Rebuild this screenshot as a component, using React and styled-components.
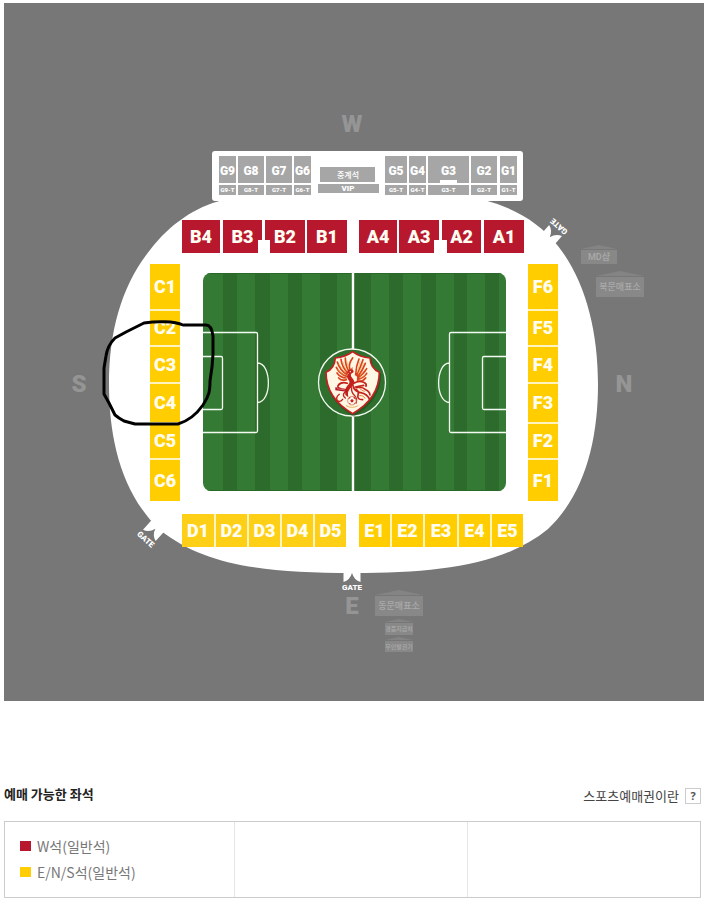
import React from "react";
import styled, { createGlobalStyle } from "styled-components";

const GlobalStyle = createGlobalStyle`
  *, *::before, *::after { box-sizing: border-box; }
  body {
    margin: 0;
    background: #fff;
    font-family: "Noto Sans CJK KR", "Noto Sans", sans-serif;
  }
`;

const RED = "#b8182d";
const YELLOW = "#ffcd00";
const AMBER = "#fdd017";
const GRAY = "#a6a6a6";

/* ---------- page parts ---------- */

const Page = styled.main`
  padding: 3px 7px 5px 4px;
`;

const StadiumMap = styled.svg`
  display: block;
  width: 100%;
  height: auto;
  background: #777;
`;

const Info = styled.section`
  margin: 80px 3px 0 0;
`;

const InfoHeader = styled.header`
  display: flex;
  align-items: center;
  justify-content: space-between;
  height: 30px;
  margin-bottom: 10px;
`;

const Title = styled.h2`
  margin: 0;
  padding-bottom: 4px;
  font-size: 13px;
  line-height: 20px;
  font-weight: 700;
  color: #222;
`;

const Help = styled.div`
  display: flex;
  align-items: center;
  gap: 6px;
`;

const HelpLink = styled.a`
  font-size: 13px;
  line-height: 20px;
  color: #444;
  text-decoration: none;
`;

const HelpButton = styled.button`
  width: 16px;
  height: 16px;
  padding: 0;
  border: 1px solid #ccc;
  background: #fff;
  color: #555;
  font: 700 11px/14px "Open Sans", sans-serif;
`;

const Grades = styled.div`
  display: grid;
  grid-template-columns: 33% 1fr 1fr;
  border: 1px solid #ccc;
`;

const GradeList = styled.ul`
  margin: 0;
  padding: 11px 15px 12px;
  list-style: none;

  & + & {
    border-left: 1px solid #e5e5e5;
  }
`;

const Grade = styled.li`
  display: flex;
  align-items: center;
  gap: 6px;
  height: 26px;
  font-size: 14px;
  color: #777;
`;

const Swatch = styled.span`
  width: 11px;
  height: 10px;
  background: ${(p) => p.$color};
`;

/* ---------- map parts ---------- */

const MapText = styled.text`
  font-family: "Roboto", "Noto Sans CJK KR", sans-serif;
  font-size: ${(p) => p.$size}px;
  font-weight: ${(p) => p.$weight || 900};
  fill: ${(p) => p.$color || "#fff"};
  text-anchor: middle;
`;

const PitchLine = styled.path`
  fill: none;
  stroke: #f4faf1;
  stroke-width: 1.3;
`;

/* [name, x, y, width, height, colour] */
const row = (names, xs, y, h, color) =>
  names.map((name, i) => [name, xs[i][0], y, xs[i][1] - xs[i][0], h, color]);
const column = (names, ys, x, w, color) =>
  names.map((name, i) => [name, x, ys[i][0], w, ys[i][1] - ys[i][0], color]);

const SIDE_YS = [[264, 309], [311, 345], [347, 382], [384, 422], [424, 458], [460, 501]];

const BLOCKS = [
  ...row(["B4", "B3", "B2", "B1"], [[182, 220], [223, 262], [265, 305], [307, 347]], 220, 33, RED),
  ...row(["A4", "A3", "A2", "A1"], [[359, 397], [399, 439], [442, 481], [484, 524]], 220, 33, RED),
  ...column(["C1", "C2", "C3", "C4", "C5", "C6"], SIDE_YS, 150, 30, YELLOW),
  ...column(["F6", "F5", "F4", "F3", "F2", "F1"], SIDE_YS, 528, 30, YELLOW),
  ...row(["D1", "D2", "D3", "D4", "D5"], [[182, 214], [216, 247], [249, 280], [282, 313], [315, 346]], 514, 33, AMBER),
  ...row(["E1", "E2", "E3", "E4", "E5"], [[359, 390], [392, 423], [425, 457], [459, 490], [492, 523]], 514, 33, YELLOW),
];

const SKY_BLOCKS = [
  ["G9", 219, 236], ["G8", 238, 264], ["G7", 266, 292], ["G6", 294, 311],
  ["G5", 385, 407], ["G4", 409, 426], ["G3", 428, 469], ["G2", 471, 497], ["G1", 500, 517],
];

const STRIPES = [[223, 237], [255, 270], [288, 302], [320, 337], [353, 371], [389, 403], [421, 436], [454, 467], [485, 499]];

/* [label, x, roof peak y, width, body top, body height, text size] */
const BOOTHS = [
  ["MD샵", 581, 245, 36, 250, 14, 9],
  ["북문매표소", 596, 271, 48, 277, 20, 9],
  ["동문매표소", 375, 590, 48, 596, 20, 9],
  ["경품지급처", 385, 619, 28, 623, 12, 6],
  ["무인발권기", 385, 637, 28, 641, 11, 6],
];

function Block({ data: [name, x, y, w, h, color] }) {
  return (
    <g>
      <rect x={x} y={y} width={w} height={h} fill={color} />
      <MapText x={x + w / 2} y={y + h / 2 + 6} $size={18} $color="#fffdf2">{name}</MapText>
    </g>
  );
}

function SkyBlock({ data: [name, left, right] }) {
  const mid = (left + right) / 2;
  return (
    <g>
      <rect x={left} y="156" width={right - left} height="27" fill={GRAY} />
      <rect x={left} y="185" width={right - left} height="10" fill={GRAY} />
      <MapText x={mid} y="175" $size={12}>{name}</MapText>
      <MapText x={mid} y="192" $size={6}>{name}-T</MapText>
    </g>
  );
}

function Gate({ transform }) {
  return (
    <g transform={transform}>
      <path d="M-8.5 -3H8.5V10Q2 8 0 1Q-2 8 -8.5 10Z" fill="#fff" />
      <MapText x="0" y="18" $size={8}>GATE</MapText>
    </g>
  );
}

function Booth({ data: [label, x, peak, w, top, h, size] }) {
  return (
    <g>
      <path d={`M${x} ${top - 1}L${x + w / 2} ${peak}L${x + w} ${top - 1}Z`} fill="#848484" />
      <rect x={x} y={top} width={w} height={h} fill="#888" />
      <MapText x={x + w / 2} y={top + h / 2 + size * 0.36} $size={size} $weight={500} $color="#aaa">
        {label}
      </MapText>
    </g>
  );
}

function Crest() {
  return (
    <g transform="translate(270 320) scale(.3333)" strokeLinecap="round" strokeLinejoin="round">
      <path d="M248 95Q226 112 196 114Q194 146 168 157Q168 235 248 281Q328 235 328 157Q302 146 300 114Q270 112 248 95Z" transform="translate(3 6)" fill="#173f18" opacity=".45" stroke="#173f18" strokeWidth="5" />
      <path d="M248 95Q226 112 196 114Q194 146 168 157Q168 235 248 281Q328 235 328 157Q302 146 300 114Q270 112 248 95Z" fill="#fff7e3" stroke="#c61f20" strokeWidth="5" />
      <g fill="none" stroke="#d9421d" strokeWidth="5">
        <path d="M231 164Q209 150 202 126M233 159Q216 141 213 118M236 153Q226 136 226 114M240 148Q234 132 248 114M229 169Q208 161 199 142M228 174Q211 173 201 159M229 179Q215 184 206 174" />
        <path d="M257 164Q258 138 267 117M260 166Q270 145 279 119M263 170Q278 151 286 130M263 174Q281 162 290 146M263 178Q282 174 290 160M262 183Q278 186 287 174" />
      </g>
      <g fill="none" stroke="#f6a13c" strokeWidth="1.8">
        <path d="M225 158L207 133M229 151L218 125M235 144L230 122M222 166L204 150M262 157L270 126M267 158L280 130M270 167L286 148M272 174L286 165" />
      </g>
      <path d="M231 158Q236 145 248 149Q255 155 246 160Q240 162 244 170L251 180Q258 190 244 202Q230 214 235 232L226 225Q223 207 233 196Q243 187 235 179Q226 168 237 160Z" fill="#c4211d" />
      <path d="M232 157L221 160L234 162ZM242 149L247 140L248 151Z" fill="#d9421d" />
      <circle cx="241" cy="155" r="2" fill="#fff7e3" />
      <g fill="none" stroke="#c4211d">
        <path d="M232 190Q213 184 204 197Q202 204 210 205M251 190Q266 181 281 187Q291 191 288 199" strokeWidth="5" />
        <path d="M249 197Q252 214 272 218Q292 222 299 239M259 203Q276 199 287 209Q299 214 300 225M254 207Q269 211 264 225Q260 239 278 239M256 201L281 196" strokeWidth="5" />
        <path d="M245 203Q243 216 253 226Q263 236 258 250M225 216Q215 226 226 234M208 223Q196 232 202 242Q211 248 218 238" strokeWidth="4" />
        <path d="M269 227Q280 225 285 235M268 204Q274 213 283 214" stroke="#ed7930" strokeWidth="3" />
      </g>
      <path d="M196 202L230 207V215L196 211Z" fill="#b51322" />
      <path d="M202 206L225 210" stroke="#e99" strokeWidth="2" strokeDasharray="3 2" />
      <circle cx="246" cy="242" r="13" fill="#fff9ed" stroke="#d05a45" strokeWidth="2" />
      <path d="M246 237L251 241L249 247H243L241 241ZM234 238L238 231L243 233M249 233L254 231L258 239M236 249L240 249L243 254M250 254L253 249L258 247" fill="#c4211d" />
      <path d="M229 257Q246 267 264 257" fill="none" stroke="#e4a34b" strokeWidth="3" strokeDasharray="4 3" />
    </g>
  );
}

function Pitch() {
  return (
    <g>
      <clipPath id="pitch"><rect x="203" y="273" width="303" height="218" rx="8" /></clipPath>
      <g clipPath="url(#pitch)">
        <rect x="203" y="273" width="303" height="218" fill="#347a34" />
        {STRIPES.map(([a, b]) => (
          <rect key={a} x={a} y="273" width={b - a} height="218" fill="#2d6b2c" />
        ))}
        <path d="M203 273.5H506M203 490.5H506" stroke="#28692a" />
      </g>
      <PitchLine d="M203 332.5H256Q257.5 332.5 257.5 334V431Q257.5 432.5 256 432.5H203M203 356.5H221Q222.5 356.5 222.5 358V408Q222.5 409.5 221 409.5H203M257.5 363C272 363 272 402.5 257.5 402.5" />
      <PitchLine d="M506 332.5H451Q449.5 332.5 449.5 334V431Q449.5 432.5 451 432.5H506M506 356.5H484Q482.5 356.5 482.5 358V408Q482.5 409.5 484 409.5H506M449.5 363C435 363 435 402.5 449.5 402.5" />
      <path d="M353 272V492" stroke="#fff" strokeWidth="2.4" />
      <circle cx="352" cy="382.5" r="33.5" fill="#2f702f" stroke="#f4faf1" strokeWidth="1.3" />
      <Crest />
    </g>
  );
}

function Stadium() {
  return (
    <StadiumMap viewBox="4 3 700 698" role="img" aria-label="경기장 좌석 배치도">
      <path
        d="M353 573C262 573 204 565 160 530C122 494 109 440 109 384C109 330 122 285 150 250C170 224 195 207 223 200H484C515 208 540 223 558 246C585 280 598 330 598 384C598 440 585 494 548 529C504 565 440 573 353 573Z"
        fill="#fff"
      />
      <rect x="212" y="151" width="311" height="50" rx="3" fill="#fff" />

      <MapText x="352" y="132" $size={24} $color="#959595">W</MapText>
      <MapText x="79" y="392" $size={24} $color="#959595">S</MapText>
      <MapText x="624" y="392" $size={24} $color="#959595">N</MapText>
      <MapText x="352" y="614" $size={24} $color="#959595">E</MapText>

      {SKY_BLOCKS.map((b) => <SkyBlock key={b[0]} data={b} />)}
      <rect x="440" y="180" width="17" height="4" fill="#fff" />
      <rect x="320" y="167" width="55" height="15" fill={GRAY} />
      <MapText x="348" y="178" $size={8} $weight={500}>중계석</MapText>
      <rect x="318" y="184" width="61" height="9" fill={GRAY} />
      <MapText x="348" y="191" $size={8}>VIP</MapText>

      <path d="M150 264H180V501H150ZM528 264H558V501H528ZM182 514H346V547H182ZM359 514H523V547H359Z" fill="#fff3c0" />
      {BLOCKS.map((b) => <Block key={b[0]} data={b} />)}
      <path d="M258 240H270V254H258ZM434 240H447V254H434Z" fill="#fff" />

      <Pitch />

      <Gate transform="translate(352 572)" />
      <Gate transform="translate(156 528) rotate(42)" />
      <Gate transform="translate(549 238) rotate(221)" />

      {BOOTHS.map((b) => <Booth key={b[0]} data={b} />)}

      <path
        d="M183 325C174 321 157 321 144 323L126 332L115 338C109 344 107 349 106 356L104 368V394L109 403L115 415L119 418L124 421L135 424H178C188 421 196 415 203 405C209 396 210 391 210 381L212 367L213 354V336C212 328 210 325 206 325H184"
        fill="none"
        stroke="#000"
        strokeWidth="3"
        strokeLinecap="round"
        strokeLinejoin="round"
      />
    </StadiumMap>
  );
}

export default function App() {
  return (
    <Page>
      <GlobalStyle />
      <Stadium />
      <Info>
        <InfoHeader>
          <Title>예매 가능한 좌석</Title>
          <Help>
            <HelpLink href="#voucher">스포츠예매권이란</HelpLink>
            <HelpButton type="button" aria-label="스포츠예매권 도움말">?</HelpButton>
          </Help>
        </InfoHeader>
        <Grades>
          <GradeList>
            <Grade><Swatch $color={RED} />W석(일반석)</Grade>
            <Grade><Swatch $color={YELLOW} />E/N/S석(일반석)</Grade>
          </GradeList>
          <GradeList />
          <GradeList />
        </Grades>
      </Info>
    </Page>
  );
}
